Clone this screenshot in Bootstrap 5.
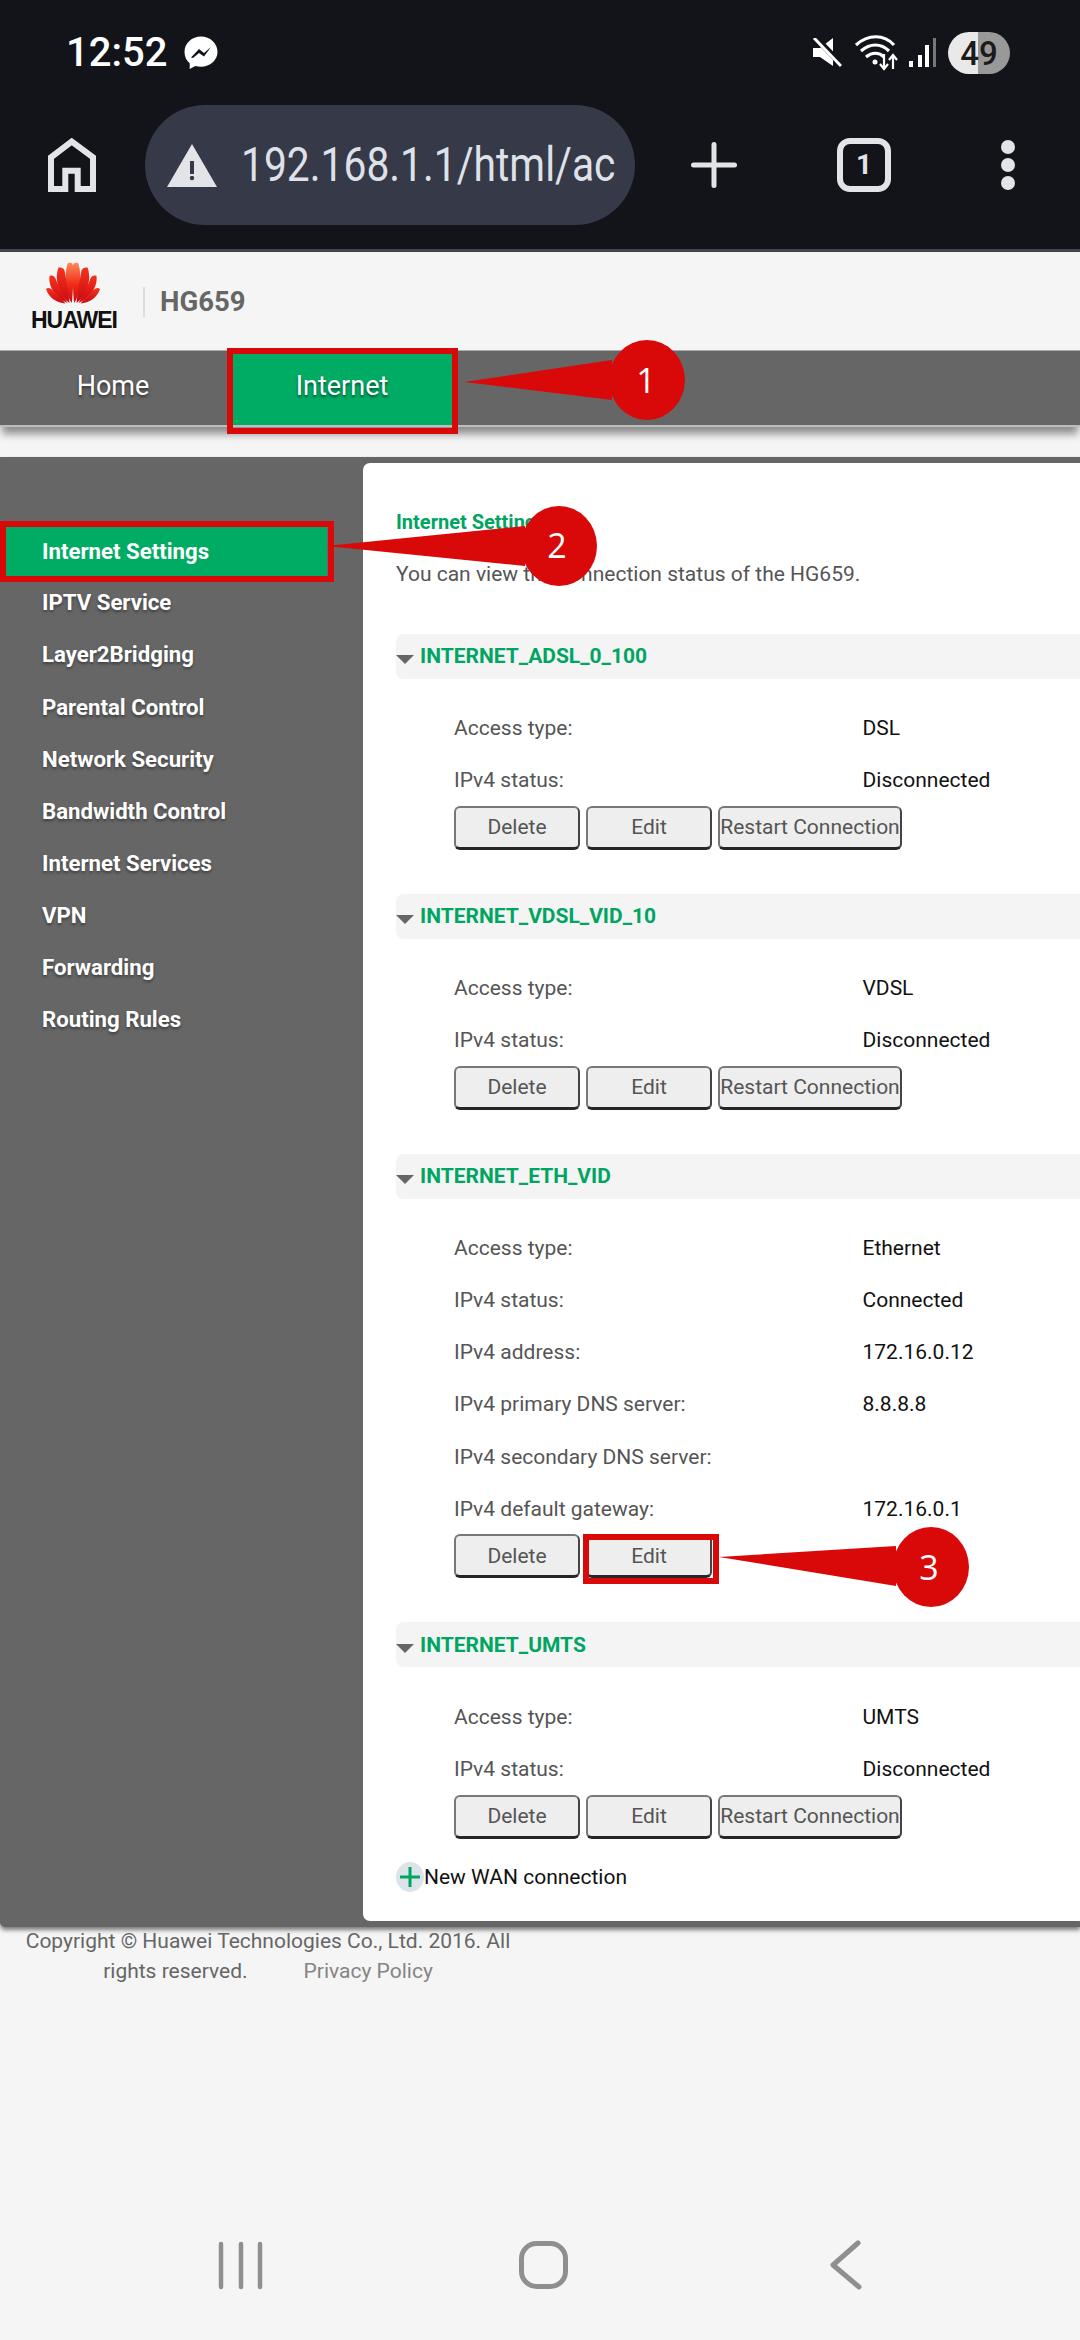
<!doctype html>
<html lang="en">
<head>
<meta charset="utf-8">
<title>HG659 Internet Settings</title>
<link href="https://cdn.jsdelivr.net/npm/bootstrap@5.3.0/dist/css/bootstrap.min.css" rel="stylesheet">
<style>
html,body{margin:0;background:#f5f5f5}
body{width:1080px;height:2340px;overflow:hidden;font-family:Roboto,"Liberation Sans",sans-serif;position:relative}
.chrome-top{background:#12141a;height:249px;color:#fff}
.chrome-strip{height:3px;background:#44464f}
.status-row{height:105px;padding:0 70px 0 66px}
.clock{font-size:40px;font-weight:500;line-height:42px;width:118px}
.wifi-ico{margin-left:12px}
.sig-ico{margin-left:9px}
.batt{width:62px;height:42px;border-radius:21px;background:linear-gradient(90deg,#e9e9e9 0 48%,#999 48% 100%);color:#1b1b1b;font-size:33px;font-weight:500;line-height:43px;text-align:center;margin-left:12px}
.tool-row{height:120px;padding-left:48px}
.tool-row>*{flex:none}
.url-pill{width:490px;height:120px;border-radius:60px;background:#353948;margin-left:49px;padding-left:22px;color:#dfe1e8;gap:24px;margin-right:56px}
.url-pill svg{flex:none}
.url-clip{width:370px;white-space:nowrap}
.url-text{display:block;width:max-content;font-size:48px;line-height:60px;font-weight:400;transform:scaleX(.85);transform-origin:0 50%}
.tab-count{width:54px;height:54px;border:6px solid #e3e4e8;border-radius:13px;margin-left:100px;font-size:28px;font-weight:700;color:#e3e4e8;line-height:42px;text-align:center}
.more-dots{margin-left:110px;width:14px;gap:4px}
.more-dots i{display:block;width:14px;height:14px;border-radius:50%;background:#e3e4e8}
.top-head{height:98px;padding-left:31px}
.brand-logo{width:84px;text-align:center;line-height:1;align-self:flex-start;padding-top:10px}
.brand-word{font-family:"Liberation Sans",sans-serif;font-weight:700;font-size:23px;color:#111;letter-spacing:-1px;line-height:20px;margin-top:6px;display:block;white-space:nowrap}
.brand-sep{width:2px;height:30px;background:#ddd;margin:2px 15px 0 28px}
.model{font-size:27.5px;font-weight:700;color:#666;line-height:32px;margin-top:2px}
.main-tabs{height:77px;background:#666;border-top:1px solid #aaa;border-bottom:2px solid #bdbdbd;box-shadow:0 9px 8px -2px #8d8d8d}
.main-tabs a{display:block;text-align:center;font-size:27px;line-height:70px;color:#fff;text-decoration:none;text-shadow:0 2px 3px rgba(0,0,0,.55)}
.main-tabs .tab-home{width:226px;margin-right:6px}
.main-tabs .tab-on{width:220px;background:#00ac64}
.work-area{margin-top:30px;height:1470px;background:#666;box-shadow:0 3px 4px rgba(0,0,0,.5);border-radius:0 0 0 5px;padding-top:6px}
.side-menu{width:363px;padding-top:61px;flex:none}
.side-menu a{display:flex;align-items:center;height:52.1px;padding-left:42px;color:#fff;font-size:22.2px;font-weight:700;text-decoration:none;text-shadow:0 2px 3px rgba(0,0,0,.4);white-space:nowrap}
.side-menu .side-on{background:#00ac64;height:49px;width:322px;margin:3px 0 1px 5px;padding-left:37px;text-shadow:none}
.panel-main{flex:1;background:#fff;border-radius:7px 0 0 7px;height:1458px;padding:44px 0 0 33px;min-width:0}
.page-title{font-size:20px;font-weight:700;color:#00a562;line-height:30px;margin:0}
.page-note{font-size:21px;color:#555;line-height:30px;margin:22px 0 0}
.wan-head{height:45px;background:#f4f4f4;border-radius:8px 0 0 8px;display:flex;align-items:center;font-size:21px;font-weight:700;color:#00a562;line-height:30px;gap:6px}
.wan-head svg{flex:none;margin-top:7px}
.wan-block{padding-bottom:44px}
.wan-first{margin-top:44.500px}
.wan-rows{padding:24px 0 0 58px}
.wan-row{display:flex;height:52.1px;align-items:center;font-size:21px}
.wan-row span:first-child{width:408.5px;color:#555}
.wan-row span:last-child{color:#111}
.wan-btns{display:flex;gap:6px;margin-top:-1px}
.wan-btn{height:44px;width:126px;padding:0;background:#eee;color:#555;font-size:21px;line-height:38px;white-space:nowrap;border-radius:6px;border:2.5px solid;border-color:#787878 #444 #262626 #787878;border-bottom-width:3px;font-family:inherit;overflow:hidden}
.wan-btn.wide{width:184px}
.new-wan{display:flex;align-items:center;font-size:21px;color:#111;margin-top:-21px}
.plus-disc{width:28px;height:30px;border-radius:50%;background:#dce4ea;display:flex;align-items:center;justify-content:center;flex:none}
.page-foot{width:536px;text-align:center;font-size:21px;line-height:30px;color:#666;position:absolute;left:0;top:1926px}
.foot-line{gap:56px}
.page-foot a{color:#858585;text-decoration:none}
.sys-nav{position:absolute;left:0;top:2236px;width:1080px;height:60px}
.anno-layer{position:absolute;left:0;top:0;width:1080px;height:2340px;pointer-events:none}
</style>
</head>
<body>
<div class="chrome-top">
  <div class="status-row d-flex align-items-center">
    <div class="clock">12:52</div>
    <svg width="34" height="34" viewBox="0 0 34 34"><path d="M17 0.500C8 0.500 0.500 7.200 0.500 16c0 4.700 2 8.600 5.200 11.300V33l5.600-3c1.800.5 3.700.7 5.700.7 9 0 16.500-6.600 16.500-14.700C33.500 7.200 26 .5 17 .5z" fill="#fff"/><path d="M7 21.500 15 13l5 4 7-6-7 9.500-5-3.500-6 5z" fill="#12141a"/></svg>
    <div class="flex-grow-1"></div>
    <svg width="30" height="30" viewBox="0 0 30 30"><path d="M1 10h7L21 0v28L8 19H1z" fill="#fff"/><path d="M3 -1 30 27" stroke="#12141a" stroke-width="6"/><path d="M2 0 29 28" stroke="#fff" stroke-width="3"/></svg>
    <svg class="wifi-ico" width="46" height="36" viewBox="0 0 46 36" fill="none" stroke="#fff" stroke-width="3.200"><path d="M2 10c12-11 28-11 38 0"/><path d="M7 16c9-8 20-8 28 0"/><path d="M12 22c6-5 13-5 18 0"/><circle cx="21" cy="27" r="2.500" fill="#fff" stroke="none"/><path d="M30 19v15M26 29l4 5 4-5M39 34V20M35 25l4-5 4 5" stroke-width="2.200"/></svg>
    <svg class="sig-ico" width="27" height="30" viewBox="0 0 27 30"><rect x="0" y="23" width="4" height="6" fill="#fff"/><rect x="9" y="17" width="4" height="12" fill="#fff"/><rect x="16" y="7" width="4" height="22" fill="#fff"/><rect x="24" y="0" width="3" height="29" fill="#777"/></svg>
    <div class="batt">49</div>
  </div>
  <div class="tool-row d-flex align-items-center">
    <svg width="48" height="54" viewBox="0 0 48 54" fill="none" stroke="#e3e4e8" stroke-width="6"><path d="M3 51V19.300L23.700 3.500 45 19.300V51H29.700V32.700H17.300V51z"/></svg>
    <div class="url-pill d-flex align-items-center">
      <svg width="50" height="43" viewBox="0 0 50 43"><path d="M25 0 50 43H0z" fill="#e3e4e8"/><rect x="23" y="17" width="4" height="13" fill="#353948"/><circle cx="25" cy="34" r="2.200" fill="#353948"/></svg>
      <div class="url-clip"><span class="url-text">192.168.1.1/html/ac</span></div>
    </div>
    <svg width="46" height="46" viewBox="0 0 46 46"><rect y="20.500" width="46" height="5" rx="2.500" fill="#e3e4e8"/><rect x="20.500" width="5" height="46" rx="2.500" fill="#e3e4e8"/></svg>
    <div class="tab-count">1</div>
    <div class="more-dots d-flex flex-column"><i></i><i></i><i></i></div>
  </div>
</div>
<div class="chrome-strip"></div>

<header class="top-head d-flex align-items-center">
  <div class="brand-logo">
    <svg width="54" height="42" viewBox="0 0 54 42">
      <defs>
        <linearGradient id="petal" x1="0" y1="0" x2="0" y2="1"><stop offset="0" stop-color="#f6321c"/><stop offset="1" stop-color="#c90a12"/></linearGradient>
        <linearGradient id="petalc" x1="0" y1="0" x2="0" y2="1"><stop offset="0" stop-color="#ff8a5a"/><stop offset=".55" stop-color="#f02a18"/><stop offset="1" stop-color="#c90a12"/></linearGradient>
      </defs>
      <g fill="url(#petal)">
        <path d="M25.800 41C19 32 18 10 22 1c3-1 5 0 5 3 .5 12 0 27-1.200 37z" fill="url(#petalc)"/>
        <path d="M28.200 41C35 32 36 10 32 1c-3-1-5 0-5 3-.5 12 0 27 1.200 37z" fill="url(#petalc)"/>
        <path d="M23.500 41C13 33 8 18 12.500 5.500c3-.5 5 .5 6 3 2 11 4 22 5 32.500z"/>
        <path d="M30.500 41C41 33 46 18 41.500 5.500c-3-.5-5 .5-6 3-2 11-4 22-5 32.500z"/>
        <path d="M21.500 41C11 36 2 26 3.500 14c3-1 4.500 0 6 2.500 3 8 8 17 12 24.500z"/>
        <path d="M32.500 41C43 36 52 26 50.500 14c-3-1-4.500 0-6 2.500-3 8-8 17-12 24.500z"/>
        <path d="M19.500 41.500C11 41 3 36 0 27c2-1.500 4-1 6 .5 5 4 9 9 13.500 14z"/>
        <path d="M34.500 41.500C43 41 51 36 54 27c-2-1.500-4-1-6 .5-5 4-9 9-13.500 14z"/>
      </g>
    </svg>
    <span class="brand-word">HUAWEI</span>
  </div>
  <div class="brand-sep"></div>
  <div class="model">HG659</div>
</header>

<nav class="main-tabs d-flex">
  <a href="#" class="tab-home">Home</a>
  <a href="#" class="tab-on">Internet</a>
</nav>

<div class="work-area d-flex">
  <div class="side-menu">
    <a href="#" class="side-on">Internet Settings</a>
    <a href="#">IPTV Service</a>
    <a href="#">Layer2Bridging</a>
    <a href="#">Parental Control</a>
    <a href="#">Network Security</a>
    <a href="#">Bandwidth Control</a>
    <a href="#">Internet Services</a>
    <a href="#">VPN</a>
    <a href="#">Forwarding</a>
    <a href="#">Routing Rules</a>
  </div>
  <main class="panel-main">
    <h1 class="page-title">Internet Settings</h1>
    <p class="page-note">You can view the connection status of the HG659.</p>

    <section class="wan-block wan-first">
      <div class="wan-head"><svg width="18" height="9" viewBox="0 0 18 9"><path d="M0 0h18L9 9z" fill="#666"/></svg>INTERNET_ADSL_0_100</div>
      <div class="wan-rows">
        <div class="wan-row"><span>Access type:</span><span>DSL</span></div>
        <div class="wan-row"><span>IPv4 status:</span><span>Disconnected</span></div>
        <div class="wan-btns"><button class="wan-btn">Delete</button><button class="wan-btn">Edit</button><button class="wan-btn wide">Restart Connection</button></div>
      </div>
    </section>

    <section class="wan-block">
      <div class="wan-head"><svg width="18" height="9" viewBox="0 0 18 9"><path d="M0 0h18L9 9z" fill="#666"/></svg>INTERNET_VDSL_VID_10</div>
      <div class="wan-rows">
        <div class="wan-row"><span>Access type:</span><span>VDSL</span></div>
        <div class="wan-row"><span>IPv4 status:</span><span>Disconnected</span></div>
        <div class="wan-btns"><button class="wan-btn">Delete</button><button class="wan-btn">Edit</button><button class="wan-btn wide">Restart Connection</button></div>
      </div>
    </section>

    <section class="wan-block">
      <div class="wan-head"><svg width="18" height="9" viewBox="0 0 18 9"><path d="M0 0h18L9 9z" fill="#666"/></svg>INTERNET_ETH_VID</div>
      <div class="wan-rows">
        <div class="wan-row"><span>Access type:</span><span>Ethernet</span></div>
        <div class="wan-row"><span>IPv4 status:</span><span>Connected</span></div>
        <div class="wan-row"><span>IPv4 address:</span><span>172.16.0.12</span></div>
        <div class="wan-row"><span>IPv4 primary DNS server:</span><span>8.8.8.8</span></div>
        <div class="wan-row"><span>IPv4 secondary DNS server:</span><span></span></div>
        <div class="wan-row"><span>IPv4 default gateway:</span><span>172.16.0.1</span></div>
        <div class="wan-btns"><button class="wan-btn">Delete</button><button class="wan-btn">Edit</button></div>
      </div>
    </section>

    <section class="wan-block">
      <div class="wan-head"><svg width="18" height="9" viewBox="0 0 18 9"><path d="M0 0h18L9 9z" fill="#666"/></svg>INTERNET_UMTS</div>
      <div class="wan-rows">
        <div class="wan-row"><span>Access type:</span><span>UMTS</span></div>
        <div class="wan-row"><span>IPv4 status:</span><span>Disconnected</span></div>
        <div class="wan-btns"><button class="wan-btn">Delete</button><button class="wan-btn">Edit</button><button class="wan-btn wide">Restart Connection</button></div>
      </div>
    </section>

    <div class="new-wan"><span class="plus-disc"><svg width="20" height="20" viewBox="0 0 20 20"><path d="M10 0v20M0 10h20" stroke="#00a562" stroke-width="3"/></svg></span>New WAN connection</div>
  </main>
</div>

<footer class="page-foot">
  <div>Copyright © Huawei Technologies Co., Ltd. 2016. All</div>
  <div class="foot-line d-flex justify-content-center"><span>rights reserved.</span><a href="#">Privacy Policy</a></div>
</footer>

<svg class="sys-nav" viewBox="0 0 1080 60" fill="none" stroke="#8f8f8f" aria-hidden="true">
  <path d="M221 8v43M241 8v43M260 8v43" stroke-width="4.500" stroke-linecap="round"/>
  <rect x="521.500" y="7.500" width="44" height="43" rx="15" stroke-width="5"/>
  <path d="M858 7 833 29l26 22" stroke-width="5" stroke-linecap="round" stroke-linejoin="round"/>
</svg>

<svg class="anno-layer" viewBox="0 0 1080 2340">
  <g fill="none" stroke="#d90909" stroke-width="6">
    <rect x="230" y="351" width="225" height="80"/>
    <rect x="3" y="524" width="328" height="55"/>
    <rect x="586" y="1537" width="130" height="44"/>
  </g>
  <g fill="#d90909">
    <path d="M464 382 612 360v40z"/><ellipse cx="647" cy="380" rx="38" ry="40"/>
    <path d="M326 546 525 526v40z"/><ellipse cx="559" cy="546" rx="38" ry="40"/>
    <path d="M719 1557 896 1546v40z"/><ellipse cx="931" cy="1567" rx="38" ry="40"/>
  </g>
  <g fill="#fff" font-family="'Open Sans',sans-serif" font-size="34" text-anchor="middle">
    <text x="646" y="393">1</text>
    <text x="557" y="558">2</text>
    <text x="929" y="1580">3</text>
  </g>
</svg>
</body>
</html>
